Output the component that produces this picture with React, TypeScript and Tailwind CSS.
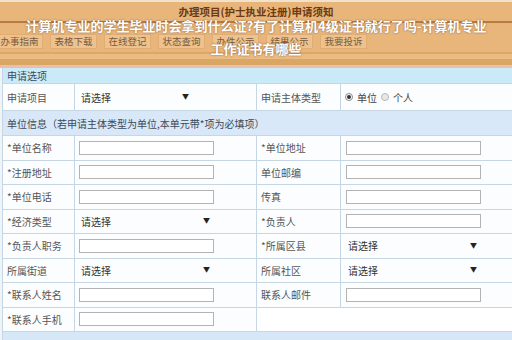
import React from "react";

const font = { fontFamily: '"Noto Sans CJK SC", "Noto Sans", sans-serif' };

const tabs = ["办事指南", "表格下载", "在线登记", "状态查询", "办件公示", "结果公示", "我要投诉"];

type Cell =
  | { kind: "input"; w?: number }
  | { kind: "select"; arrow: number }
  | { kind: "radio" }
  | { kind: "empty" };

type Row = { l1: string; c1: Cell; l2: string; c2: Cell; blankRight?: boolean };

const rows: Row[] = [
  { l1: "*单位名称", c1: { kind: "input" }, l2: "*单位地址", c2: { kind: "input" } },
  { l1: "*注册地址", c1: { kind: "input" }, l2: "单位邮编", c2: { kind: "input" } },
  { l1: "*单位电话", c1: { kind: "input" }, l2: "传真", c2: { kind: "input" } },
  { l1: "*经济类型", c1: { kind: "select", arrow: 124 }, l2: "*负责人", c2: { kind: "input" } },
  { l1: "*负责人职务", c1: { kind: "input" }, l2: "*所属区县", c2: { kind: "select", arrow: 124 } },
  { l1: "所属街道", c1: { kind: "select", arrow: 124 }, l2: "所属社区", c2: { kind: "select", arrow: 124 } },
  { l1: "*联系人姓名", c1: { kind: "input" }, l2: "联系人邮件", c2: { kind: "input" } },
  { l1: "*联系人手机", c1: { kind: "input" }, l2: "", c2: { kind: "empty" }, blankRight: true },
];

function Value({ cell, left }: { cell: Cell; left: number }) {
  if (cell.kind === "input")
    return <div className="h-[14px] w-[135px] border border-[#b3b3b3] bg-white" style={{ marginLeft: left }} />;
  if (cell.kind === "select")
    return (
      <div className="relative flex h-[14px] w-[135px] items-center text-[10px] text-[#333]" style={{ marginLeft: left }}>
        <span className="pl-[2px]">请选择</span>
        <span className="absolute top-[1px] text-[7px] text-[#222]" style={{ left: cell.arrow }}>▼</span>
      </div>
    );
  if (cell.kind === "radio")
    return (
      <div className="ml-[4px] flex items-center text-[10px] text-[#444]">
        <span className="flex h-[8px] w-[8px] items-center justify-center rounded-full border border-[#8a8a8a] bg-white">
          <span className="h-[4px] w-[4px] rounded-full bg-[#333]" />
        </span>
        <span className="ml-[4px]">单位</span>
        <span className="ml-[4px] h-[8px] w-[8px] rounded-full border border-[#b8b8b8] bg-[#e8e8e8]" />
        <span className="ml-[4px]">个人</span>
      </div>
    );
  return null;
}

export default function App() {
  return (
    <div className="relative h-[340px] w-[512px] overflow-hidden bg-[#e8b57b]" style={font}>
      <div className="h-[2px] bg-[#f3e2cb]" />
      <div className="flex h-[19px] items-center justify-center text-[10.5px] font-bold text-[#6b3a12]">
        办理项目(护士执业注册)申请须知
      </div>
      <div className="h-[2px] bg-[#b97c40]" />
      <div className="h-[11px]" />
      <div className="ml-[-4px] flex h-[15px] gap-[7px]">
        {tabs.map((t) => (
          <div
            key={t}
            className="flex w-[47px] items-center justify-center border border-[#e2ad73] bg-[#edc28e] text-[9.5px] text-[#7a5a3a]"
          >
            {t}
          </div>
        ))}
      </div>
      <div className="h-[3px]" />
      <div className="h-[2px] bg-[#dfa767]" />
      <div className="h-[5px] bg-[#eabb83]" />
      <div className="h-[6px] bg-[#daa663]" />
      <div className="h-[3px] bg-[#e8bfae]" />

      <div className="bg-[#eef4f8] pl-[2px]">
        <div className="border-l border-[#c6d6e2] bg-[#fbfdfe]">
          <div className="flex h-[15px] items-center bg-[#cbeaf8] px-[4px] text-[10px] text-[#3b4a5a]">申请选项</div>
          <div className="grid h-[27px] grid-cols-[72px_182px_84px_1fr] border-t border-[#c6d6e2]">
            <div className="flex items-center border-r border-[#c6d6e2] px-[4px] text-[10px] text-[#555]">申请项目</div>
            <div className="flex items-center border-r border-[#c6d6e2]">
              <Value cell={{ kind: "select", arrow: 103 }} left={4} />
            </div>
            <div className="flex items-center border-r border-[#c6d6e2] px-[4px] text-[10px] text-[#555]">申请主体类型</div>
            <div className="flex items-center">
              <Value cell={{ kind: "radio" }} left={4} />
            </div>
          </div>
          <div className="flex h-[25px] items-center border-t border-[#c6d6e2] bg-[#d8e8f8] px-[4px] text-[10px] text-[#3b4a5a]">
            单位信息（若申请主体类型为单位,本单元带*项为必填项）
          </div>
          {rows.map((r) => (
            <div key={r.l1} className="grid h-[24.5px] grid-cols-[72px_182px_84px_1fr] border-t border-[#c6d6e2]">
              <div className="flex items-center border-r border-[#c6d6e2] px-[4px] text-[10px] text-[#555]">{r.l1}</div>
              <div className="flex items-center border-r border-[#c6d6e2]">
                <Value cell={r.c1} left={4} />
              </div>
              {r.blankRight ? (
                <div className="col-span-2 bg-white" />
              ) : (
                <>
                  <div className="flex items-center border-r border-[#c6d6e2] px-[4px] text-[10px] text-[#555]">{r.l2}</div>
                  <div className="flex items-center">
                    <Value cell={r.c2} left={5} />
                  </div>
                </>
              )}
            </div>
          ))}
          <div className="h-[20px] border-t border-[#c6d6e2] bg-[#d6e8f8]" />
        </div>
      </div>

      <div className="absolute left-0 top-[14px] w-full text-center text-[13px] font-bold leading-[23px] text-white [text-shadow:0_0_2px_rgba(90,50,20,0.7)]">
        <div className="whitespace-nowrap">计算机专业的学生毕业时会拿到什么证?有了计算机4级证书就行了吗-计算机专业</div>
        <div className="whitespace-nowrap">工作证书有哪些</div>
      </div>
    </div>
  );
}
